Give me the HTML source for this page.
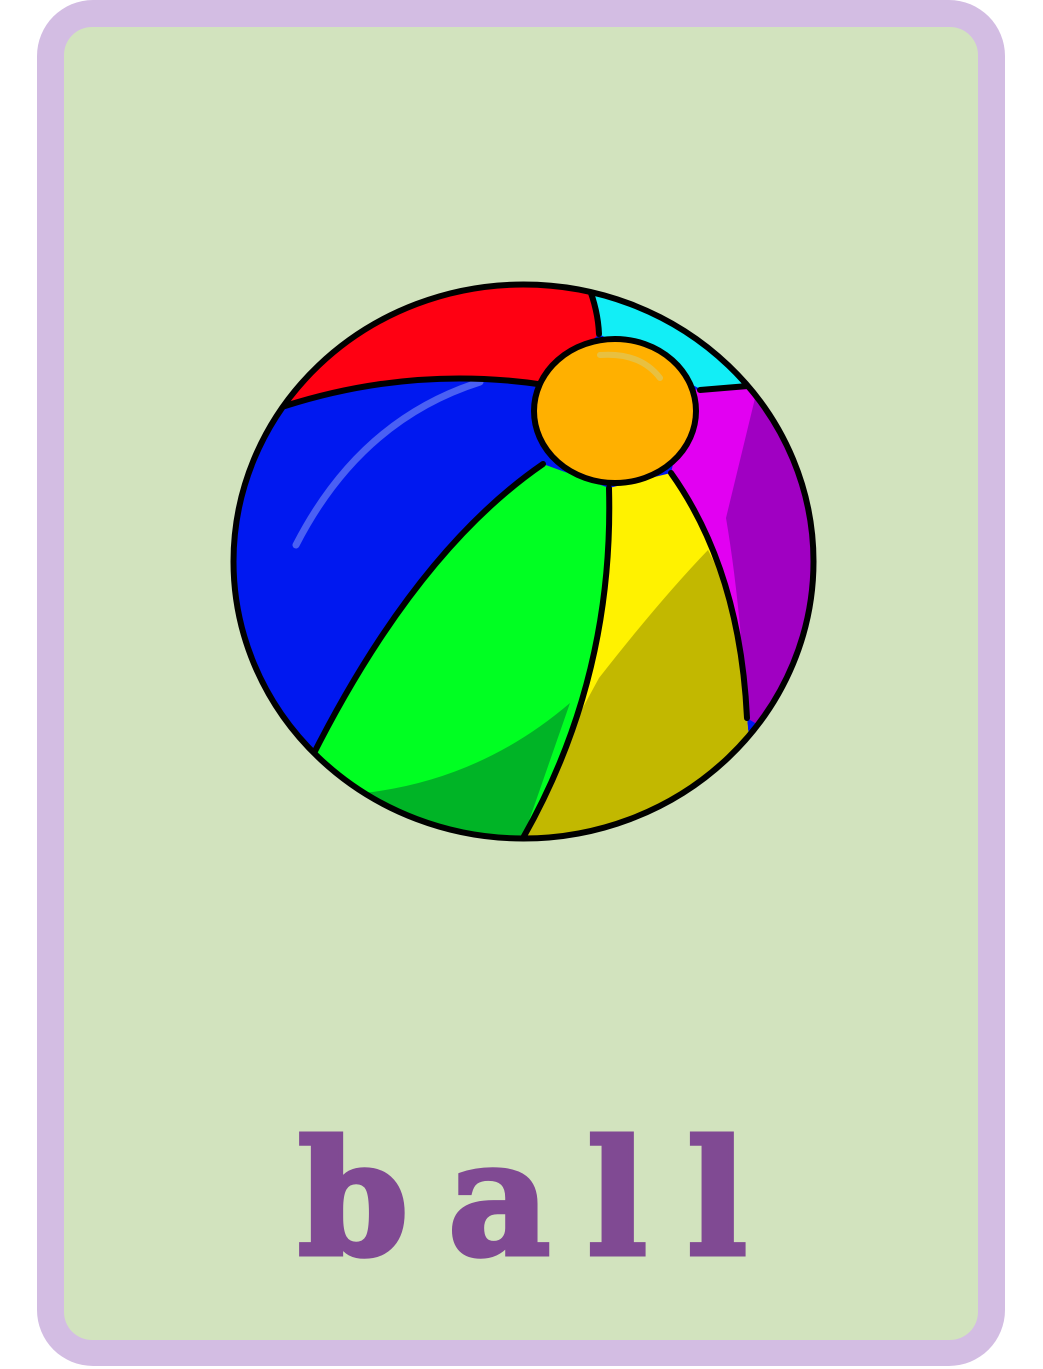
<!DOCTYPE html>
<html><head><style>
html,body{margin:0;padding:0;background:#fff;}
body{width:1043px;height:1369px;position:relative;overflow:hidden;}
.outer{position:absolute;left:37px;top:0;width:968px;height:1366px;background:#d3bde3;border-radius:56px;}
.inner{position:absolute;left:64px;top:27px;width:914px;height:1313px;background:#d2e3be;border-radius:28px;}
.l{position:absolute;top:1121px;font-family:"DejaVu Serif","Liberation Serif",serif;font-weight:bold;font-size:158px;color:#804a93;line-height:1;-webkit-text-stroke:5px #804a93;}
</style></head><body>
<div class="outer"></div><div class="inner"></div>
<svg width="1043" height="1369" style="position:absolute;left:0;top:0">
<defs><clipPath id="c"><ellipse cx="523.5" cy="561.5" rx="290" ry="277"/></clipPath></defs>
<g clip-path="url(#c)">
<rect x="200" y="250" width="650" height="620" fill="#0018f0"/>
<path d="M200,420 L298,404 Q414,365 545,385 L599,334 Q598,310 588,280 L200,250 Z" fill="#ff0012"/>
<path d="M588,280 Q598,310 599,334 L702,390 L760,385 L850,380 L850,250 Z" fill="#12eef6"/>
<path d="M690,390 L755,385 L850,380 L850,780 L747,718 Q740,570 671,473 Z" fill="#e200f2"/>
<path d="M757,390 L850,380 L850,780 L747,718 Q740,600 726,518 Z" fill="#a000c2"/>
<path d="M609,488 C612,600 590,720 523,838 L760,860 L747,718 Q740,570 671,473 Z" fill="#fff200"/>
<path d="M599,678 Q660,600 708,550 Q745,620 747,718 L760,860 L500,860 Z" fill="#c2b800"/>
<path d="M543,464 Q415,552 311,759 Q400,830 523,838 C590,720 612,600 609,488 Z" fill="#00ff22"/>
<path d="M364,793 Q480,780 570,703 L523,838 L400,860 Z" fill="#00b426"/>
<path d="M296,545 Q360,420 480,382" stroke="#4a60f4" stroke-width="7" fill="none" stroke-linecap="round"/>
<g fill="none" stroke="#000" stroke-width="6" stroke-linecap="round">
<path d="M285,406 Q414,365 545,385"/>
<path d="M588,285 Q598,310 599,334"/>
<path d="M700,390 L760,385"/>
<path d="M671,473 Q740,570 747,718"/>
<path d="M609,488 C612,600 590,720 523,838"/>
<path d="M543,464 Q415,552 311,759"/>
</g>
</g>
<ellipse cx="523.5" cy="561.5" rx="290" ry="277" fill="none" stroke="#000" stroke-width="6"/>
<ellipse cx="615" cy="411" rx="81" ry="72" fill="#ffb000" stroke="#000" stroke-width="6"/>
<path d="M600,355 Q640,352 660,378" stroke="#e8c040" stroke-width="6" fill="none" stroke-linecap="round"/>
</svg>
<div class="l" style="left:298px">b</div>
<div class="l" style="left:448px">a</div>
<div class="l" style="left:587px">l</div>
<div class="l" style="left:687px">l</div>
</body></html>
